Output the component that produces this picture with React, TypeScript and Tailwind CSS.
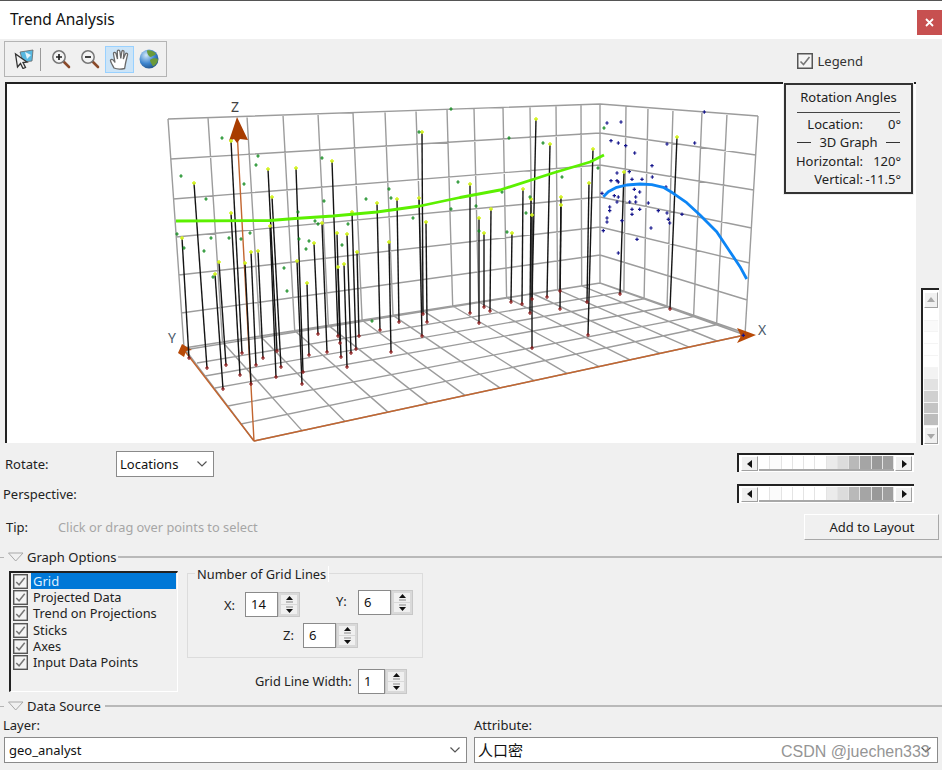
import React from "react";

type P = [number, number];
const lerp = (a: P, b: P, t: number): P => [a[0] + (b[0] - a[0]) * t, a[1] + (b[1] - a[1]) * t];
const line = (a: P, b: P) => `M${a[0].toFixed(1)} ${a[1].toFixed(1)}L${b[0].toFixed(1)} ${b[1].toFixed(1)}`;

const A: P = [184, 348], B: P = [600, 283], C: P = [745, 335], D: P = [254, 441];
const At: P = [168, 119], Bt: P = [600, 104], Ct: P = [758, 116];
const leftTops = [168, 208, 247, 283, 318, 353, 385, 416, 447, 474, 503, 530, 556, 581, 600];
const rightTops = [600, 626, 648, 673, 702, 727, 758];
const frontX = [254, 302, 345, 388, 428, 465, 500, 534, 567, 599, 630, 660, 689, 717, 745];
const backY = [104, 133, 165, 197, 227, 255, 283];
const leftY = [119, 159, 199, 237, 275, 313, 350];
const rightY = [116, 155, 190, 228, 263, 300, 333];
const adPts: P[] = [[184, 348], [197, 363], [205, 376], [215, 388], [228, 406], [241, 424], [254, 441]];

function gridPath() {
  let d = "";
  leftTops.forEach((x, i) => {
    const t = (x - 168) / 432;
    const top = lerp(At, Bt, t), bot = lerp(A, B, t);
    d += line(top, bot);
    const front: P = [frontX[i], D[1] + ((frontX[i] - D[0]) / (C[0] - D[0])) * (C[1] - D[1])];
    d += line(bot, front);
  });
  rightTops.forEach((x, i) => {
    const t = (x - 600) / 158;
    const top = lerp(Bt, Ct, t), bot = lerp(B, C, t);
    d += line(top, bot);
    d += line(bot, adPts[i]);
  });
  for (let j = 0; j < 7; j++) {
    const lx = 168 + (j / 6) * 16;
    const rx = 758 - (j / 6) * 13;
    d += line([lx, leftY[j]], [600, backY[j]]);
    d += line([600, backY[j]], [rx, rightY[j]]);
    d += line(adPts[j], lerp(B, C, (rightTops[j] - 600) / 158));
  }
  return d;
}

const sticks: [number, number, number, number][] = [
  [194, 183, 207, 368], [182, 238, 189, 358], [231, 141, 242, 353], [231, 213, 240, 375], [219, 262, 226, 365],
  [215, 274, 223, 389], [245, 263, 251, 384], [251, 252, 256, 365], [258, 251, 263, 358], [268, 169, 277, 351],
  [272, 197, 281, 367], [270, 226, 276, 377], [296, 168, 303, 372], [297, 261, 302, 384], [307, 283, 309, 355],
  [332, 161, 338, 336], [314, 243, 318, 334], [322, 223, 327, 352], [337, 233, 340, 343], [347, 234, 351, 353],
  [338, 267, 341, 357], [344, 264, 347, 367], [352, 212, 356, 349], [357, 252, 359, 336], [377, 203, 380, 330],
  [389, 242, 391, 352], [397, 199, 399, 322], [419, 198, 422, 336], [422, 132, 423, 314], [426, 222, 427, 322],
  [470, 184, 470, 313], [479, 218, 479, 323], [484, 233, 484, 307], [491, 209, 490, 311], [512, 233, 511, 302],
  [523, 189, 522, 304], [531, 199, 530, 313], [532, 215, 532, 348], [536, 119, 532, 299], [550, 144, 547, 297],
  [561, 197, 560, 291], [561, 205, 560, 309], [589, 183, 587, 302], [593, 149, 588, 335], [624, 172, 620, 294],
  [677, 137, 670, 309],
];

const green: P[] = [
  [222, 138], [181, 176], [206, 199], [258, 156], [256, 165], [244, 184], [322, 158], [324, 201], [366, 199], [389, 189],
  [391, 198], [451, 109], [458, 182], [451, 209], [413, 218], [419, 132], [298, 212], [315, 221], [318, 224], [348, 224],
  [177, 234], [184, 248], [211, 238], [204, 251], [229, 238], [241, 239], [250, 233], [299, 239], [309, 241], [306, 249],
  [342, 245], [284, 268], [509, 138], [543, 143], [562, 177], [598, 168], [604, 128], [502, 192], [476, 206], [530, 197],
  [526, 213], [507, 232], [479, 231], [287, 291], [372, 321], [213, 277],
];
const blueZ: P[] = [
  [441, 99], [483, 96], [733, 66], [453, 152], [475, 159], [497, 167], [621, 162], [704, 159], [524, 189], [576, 227],
  [471, 249], [508, 245], [577, 261], [453, 272], [471, 272], [475, 276], [516, 268], [546, 268], [618, 291], [523, 298],
  [539, 306], [463, 317], [475, 321], [527, 321], [471, 336], [509, 336], [527, 336], [565, 339], [449, 351], [449, 362],
  [516, 358], [539, 358], [595, 362], [621, 369], [666, 373], [516, 373], [441, 384], [441, 396], [625, 388], [629, 399],
  [486, 392], [573, 414], [430, 422], [531, 448], [475, 489], [426, 310], [850, 736],
];
const blue: P[] = blueZ.map(([x, y]) => [x / 3 + 460, y / 3 + 90]);
const plus = (pts: P[], r: number) => pts.map(([x, y]) => `M${(x - r).toFixed(1)} ${y.toFixed(1)}h${2 * r}M${x.toFixed(1)} ${(y - r).toFixed(1)}v${2 * r}`).join("");
const blueCurve = ([[430, 320], [445, 305], [470, 292], [500, 285], [540, 282], [575, 284], [610, 292], [640, 310], [680, 338], [720, 375], [770, 425], [810, 485], [840, 530], [860, 567]] as P[])
  .map(([x, y], i) => `${i ? "L" : "M"}${(x / 3 + 460).toFixed(1)} ${(y / 3 + 90).toFixed(1)}`)
  .join("");

function Chart() {
  return (
    <svg width="909" height="359" viewBox="7 84 909 359" className="block" style={{ fontFamily: "'Noto Sans', sans-serif" }}>
      <path d={gridPath()} fill="none" stroke="#9c9c9c" strokeWidth="1.4" />
      <path d="M254 441L237 130M184 350L254 441M254 441L745 335" fill="none" stroke="#c2652f" strokeWidth="1.4" />
      <path d="M237 117L229 141L234 139L237 143L240 139L248 140Z" fill="#a83c00" />
      <path d="M756 335L737 328L741 336L737 343Z" fill="#b84a08" />
      <path d="M178 353L182 344L192 350L186 351L184 357Z" fill="#b84a08" />
      {sticks.map(([a, b, c, d], i) => (
        <path key={i} d={`M${a} ${b}L${c} ${d}`} stroke="#141414" strokeWidth="1.4" />
      ))}
      <path d={plus(sticks.map(([a, b]) => [a, b] as P), 2)} stroke="#d4f51e" strokeWidth="1.4" />
      <path d={plus(sticks.map(([, , c, d]) => [c, d] as P), 2)} stroke="#8e1b1b" strokeWidth="1.2" />
      <path d={plus(green, 1.7)} stroke="#0f8a1c" strokeWidth="1.2" />
      <path d={plus(blue, 1.7)} stroke="#14148c" strokeWidth="1.2" />
      <path d="M176 221L270 220.5L295 218.5L333 216L377 212L420 206L460 197.5L500 190L553 173L590 162L604 155" fill="none" stroke="#5cf000" strokeWidth="2.8" strokeLinejoin="round" />
      <path d={blueCurve} fill="none" stroke="#0c85f5" strokeWidth="2.8" strokeLinejoin="round" />
      <text x="231" y="112" fontSize="14" fill="#444">Z</text>
      <text x="758" y="335" fontSize="14" fill="#4a5a6a">X</text>
      <text x="168" y="343" fontSize="14" fill="#4a5a6a">Y</text>
    </svg>
  );
}

function Check({ size = 16 }: { size?: number }) {
  return (
    <svg width={size} height={size} viewBox="0 0 16 16" className="block shrink-0">
      <rect x="0.75" y="0.75" width="14.5" height="14.5" fill="#f4f4f4" stroke="#555" strokeWidth="1.5" />
      <path d="M3.5 8.5L6.5 11.5L12.5 4" fill="none" stroke="#777" strokeWidth="1.6" />
    </svg>
  );
}

function Chevron() {
  return (
    <svg width="12" height="8" viewBox="0 0 12 8" className="block shrink-0">
      <path d="M1.5 1.5L6 6L10.5 1.5" fill="none" stroke="#555" strokeWidth="1.2" />
    </svg>
  );
}

function Spin() {
  return (
    <div className="flex flex-col w-[22px] h-full bg-[#d9d9d9] border border-[#c8c8c8] p-[2px] gap-[1px]">
      <div className="flex-1 bg-[#f0f0f0] flex items-center justify-center">
        <svg width="9" height="7" viewBox="0 0 9 7"><path d="M4.5 0L8 4H1Z" fill="#111" /><path d="M1 6H8" stroke="#888" /></svg>
      </div>
      <div className="flex-1 bg-[#f0f0f0] flex items-center justify-center">
        <svg width="9" height="7" viewBox="0 0 9 7"><path d="M4.5 7L8 3H1Z" fill="#111" /><path d="M1 1H8" stroke="#888" /></svg>
      </div>
    </div>
  );
}

function Num({ value, w = 33, h = 25 }: { value: string; w?: number; h?: number }) {
  return (
    <div className="flex" style={{ height: h }}>
      <div className="bg-white border border-[#8a8a8a] pl-[5px] flex items-center text-[13px] text-[#111]" style={{ width: w }}>
        {value}
      </div>
      <Spin />
    </div>
  );
}

function Section({ title, lineFrom }: { title: string; lineFrom: number }) {
  return (
    <div className="flex items-center h-[18px]">
      <div className="w-[4px] h-px bg-[#b4b4b4]" />
      <svg width="23" height="12" viewBox="0 0 23 12" className="block shrink-0">
        <path d="M4.5 2H19L11.7 10Z" fill="#f0f0f0" stroke="#a8a8a8" />
      </svg>
      <span className="text-[13px] text-[#222] whitespace-nowrap" style={{ width: lineFrom }}>{title}</span>
      <div className="flex-1 h-[2px] bg-[#b9b9b9]" />
    </div>
  );
}

const bands = ["#ffffff", "#fbfbfb", "#ffffff", "#ffffff", "#ffffff", "#ffffff", "#ebebeb", "#dcdcdc", "#b9b9b9", "#a5a5a5", "#999999", "#9f9f9f"];
const vBands = ["#ffffff", "#fafafa", "#ffffff", "#ffffff", "#ffffff", "#f3f3f3", "#e2e2e2", "#d0d0d0", "#c4c4c4", "#bdbdbd"];

function Arrow({ dir, color = "#111" }: { dir: "l" | "r" | "u" | "d"; color?: string }) {
  const d = { l: "M1 5L6 1V9Z", r: "M7 5L2 1V9Z", u: "M5 2L9 7H1Z", d: "M5 8L9 3H1Z" }[dir];
  return <svg width="10" height="10" viewBox="0 0 10 10" className={dir === "l" || dir === "r" ? "block ml-[3px]" : "block"}><path d={d} fill={color} /></svg>;
}

function Btn({ children, className }: { children: React.ReactNode; className: string }) {
  return (
    <div className={`bg-[#f0f0f0] border-r border-b border-[#a0a0a0] border-t border-l border-t-white border-l-white flex items-center justify-center shrink-0 ${className}`}>
      {children}
    </div>
  );
}

function HSlider() {
  return (
    <div className="w-[177px] h-[19px] flex items-stretch bg-white border-t-2 border-l-2 border-[#222] pl-[2px] pr-[2px] pt-[1px] pb-[1px]">
      <Btn className="w-[17px]"><Arrow dir="l" /></Btn>
      <div className="flex-1 flex border-b-2 border-[#a8a8a8] mx-px">
        {bands.map((c, i) => (
          <div key={i} className="flex-1 border-r border-[#e4e4e4]" style={{ backgroundColor: c }} />
        ))}
      </div>
      <Btn className="w-[17px]"><Arrow dir="r" /></Btn>
    </div>
  );
}

function VSlider() {
  return (
    <div className="w-[18px] h-[157px] flex flex-col bg-white border-t-2 border-l-2 border-[#222] px-[1px] pt-[2px] pb-[1px]">
      <Btn className="h-[16px] w-full"><Arrow dir="u" color="#a8a8a8" /></Btn>
      <div className="flex-1 flex flex-col my-px">
        {vBands.map((c, i) => (
          <div key={i} className="flex-1 border-b border-[#f4f4f4]" style={{ backgroundColor: c }} />
        ))}
      </div>
      <Btn className="h-[17px] w-full"><Arrow dir="d" color="#a8a8a8" /></Btn>
    </div>
  );
}

function SelectIcon() {
  return (
    <svg width="20" height="20" viewBox="0 0 20 20" className="block">
      <path d="M6 3L19 1L18 12L9 13Z" fill="#58b8e0" stroke="#666" strokeWidth="0.8" />
      <path d="M11 3L17 6L13 10" fill="#e4f4fa" />
      <path d="M1.5 5L3.5 18L6.5 14.5L9 19.5L11.5 18.5L9 13.5L13 13Z" fill="#f4f4f4" stroke="#333" strokeWidth="1.3" />
    </svg>
  );
}

function Mag({ minus }: { minus?: boolean }) {
  return (
    <svg width="20" height="20" viewBox="0 0 20 20" className="block">
      <path d="M12.5 12.5L18 18" stroke="#8a4a2a" strokeWidth="2.6" strokeLinecap="round" />
      <circle cx="8" cy="8" r="6.2" fill="#f4f4f4" stroke="#777" strokeWidth="1.5" />
      <path d={minus ? "M5 8H11" : "M5 8H11M8 5V11"} stroke="#222" strokeWidth="1.7" />
    </svg>
  );
}

function HandIcon() {
  return (
    <svg width="22" height="22" viewBox="0 0 22 22" className="block">
      <path
        d="M5 20C3.5 17 1.5 14 1.5 12.5C1.5 11 3.5 11 5 13L6 14.5L4.5 6C4.3 4.3 6.4 3.8 7 5.5L8.5 11L8.3 3.5C8.3 1.6 10.6 1.6 10.9 3.5L11.8 10.5L12.8 3.6C13.1 2 15.2 2.2 15 4L14.3 11L16.4 6C17 4.6 18.9 5.2 18.5 6.8L16.8 14C16.3 16.5 16 18.5 15.6 20.5C12 21.3 8 21.3 5 20Z"
        fill="#fff"
        stroke="#6a6a6a"
        strokeWidth="1.3"
      />
    </svg>
  );
}

function Globe() {
  return (
    <svg width="20" height="20" viewBox="0 0 20 20" className="block">
      <defs>
        <radialGradient id="g" cx="0.35" cy="0.3" r="0.8">
          <stop offset="0" stopColor="#cfe6f8" />
          <stop offset="0.55" stopColor="#3f86cf" />
          <stop offset="1" stopColor="#1b4a80" />
        </radialGradient>
      </defs>
      <circle cx="10" cy="10" r="9.5" fill="url(#g)" />
      <path d="M8 1.5C11 .8 15 2 17 5C16 7 13 6.5 12 8C10 8 8 5 8 1.5ZM11 11C13 9 17 9 19 10C19 13 17 16 14 17.5C13 15 11 13.5 11 11Z" fill="#6a9a3a" />
    </svg>
  );
}

const listItems = ["Grid", "Projected Data", "Trend on Projections", "Sticks", "Axes", "Input Data Points"];

function Sel({ text, className, textClass = "text-[13px]" }: { text: string; className: string; textClass?: string }) {
  return (
    <div className={`h-[26px] bg-white border border-[#8a8a8a] flex items-center justify-between pl-[3px] pr-[5px] text-[#111] ${className}`}>
      <span className={textClass}>{text}</span>
      <Chevron />
    </div>
  );
}

export default function App() {
  return (
    <div
      className="w-[942px] h-[770px] overflow-hidden flex flex-col bg-[#f0f0f0] text-[#222] text-[13px] leading-none"
      style={{ fontFamily: "'Noto Sans', 'Noto Sans CJK SC', sans-serif" }}
    >
      <div className="h-px bg-[#555555]" />
      <div className="h-[38px] bg-white flex justify-between shrink-0">
        <div className="pl-[10px] pt-[11px] text-[15.5px] text-[#111]">Trend Analysis</div>
        <div className="mt-[9px] w-[25px] h-[25px] bg-[#c75050] flex items-center justify-center">
          <svg width="9" height="9" viewBox="0 0 9 9"><path d="M1 1L8 8M8 1L1 8" stroke="#fff" strokeWidth="1.8" /></svg>
        </div>
      </div>

      <div className="h-[43px] shrink-0 flex justify-between pt-[2px] pl-[4px]">
        <div className="w-[163px] h-[36px] border border-[#b4b4b4] flex items-center pl-[9px]">
          <SelectIcon />
          <div className="w-px h-[23px] bg-[#9a9a9a] ml-[6px] mr-[10px]" />
          <Mag />
          <div className="w-[9px]" />
          <Mag minus />
          <div className="ml-[5px] w-[29px] h-[27px] bg-[#cce4f7] border border-[#99d1ff] flex items-center justify-center"><HandIcon /></div>
          <div className="ml-[5px]"><Globe /></div>
        </div>
        <div className="flex items-start gap-[4px] pt-[12px] pr-[79px]">
          <Check size={16} />
          <span className="text-[13px] text-[#333] pt-[2px]">Legend</span>
        </div>
      </div>

      <div className="relative h-[363px] shrink-0 flex items-start pl-[5px]">
        <div className="w-[911px] h-[361px] bg-white border-t-2 border-l-2 border-[#222]">
          <Chart />
        </div>
        <div className="ml-[5px] mt-[206px]"><VSlider /></div>
        <div className="absolute left-[784px] top-[1px] w-[129px] h-[111px] bg-[#f0f0f0] border-2 border-[#333] ring-1 ring-[#f0f0f0] flex flex-col items-center pt-[6px] text-[13px] text-[#222]">
          <div>Rotation Angles</div>
          <div className="w-[103px] h-px bg-[#444] mt-[8px] mb-[2px]" />
          <div className="w-[115px] grid grid-cols-[71px_1fr] auto-rows-[18.5px] items-center pl-px">
            <div className="text-right">Location:</div><div className="text-right pr-[5px]">0°</div>
          </div>
          <div className="w-[103px] h-[18.5px] flex items-center justify-between">
            <div className="w-[14px] h-px bg-[#333]" />3D Graph<div className="w-[14px] h-px bg-[#333]" />
          </div>
          <div className="w-[115px] grid grid-cols-[71px_1fr] auto-rows-[18.5px] items-center pl-px">
            <div className="text-right">Horizontal:</div><div className="text-right pr-[5px]">120°</div>
            <div className="text-right">Vertical:</div><div className="text-right pr-[5px] whitespace-nowrap">-11.5°</div>
          </div>
        </div>
      </div>

      <div className="h-[32px] shrink-0 flex items-start justify-between pt-[6px] pl-[5px] pr-[28px]">
        <div className="flex items-center h-[26px]">
          <span className="w-[111px]">Rotate:</span>
          <Sel text="Locations" className="w-[98px] pr-[3px]" />
        </div>
        <div className="pt-[2px]"><HSlider /></div>
      </div>
      <div className="h-[32px] shrink-0 flex items-center justify-between pl-[3px] pr-[28px]">
        <span className="pt-[2px]">Perspective:</span>
        <HSlider />
      </div>
      <div className="h-[36px] shrink-0 flex items-center justify-between pl-[6px] pr-[3px]">
        <div className="flex items-center">
          <span className="w-[52px]">Tip:</span>
          <span className="text-[#a6a6a6] text-[12.8px]">Click or drag over points to select</span>
        </div>
        <div className="w-[135px] h-[26px] bg-[#f0f0f0] border border-t-white border-l-white border-r-[#a8a8a8] border-b-[#a8a8a8] flex items-center justify-center text-[#222] pl-px">
          Add to Layout
        </div>
      </div>

      <div className="h-[26px] shrink-0 pt-[3px]"><Section title="Graph Options" lineFrom={91} /></div>

      <div className="h-[122px] shrink-0 flex items-start pl-[9px]">
        <div className="w-[169px] h-[121px] border-t-2 border-l-2 border-[#222] border-r border-b border-r-white border-b-white flex flex-col pl-[2px]">
          {listItems.map((t, i) => (
            <div key={t} className="h-[16.3px] flex items-center shrink-0">
              <Check size={15} />
              <span className={i === 0 ? "ml-[3px] w-[145px] h-[16px] bg-[#0078d7] text-[#dff0ff] flex items-center pl-[2px]" : "ml-[5px] whitespace-nowrap text-[12.8px]"}>{t}</span>
            </div>
          ))}
        </div>
        <div className="relative ml-[9px] mt-[2px] w-[236px] h-[85px] border border-[#dcdcdc] flex flex-col">
          <div className="absolute left-[7px] -top-[8px] px-[2px] bg-[#f0f0f0] text-[#222] h-[16px] flex items-center border-r border-white text-[12.8px]">Number of Grid Lines</div>
          <div className="flex items-start mt-[18px] pl-[36px]">
            <span className="w-[21px] pt-[7px]">X:</span>
            <Num value="14" />
            <div className="w-[36px]" />
            <span className="w-[22px] pt-[5px] -mt-[2px]">Y:</span>
            <div className="-mt-[2px]"><Num value="6" /></div>
          </div>
          <div className="flex items-center mt-[6px] pl-[95px]">
            <span className="w-[20px]">Z:</span>
            <Num value="6" />
          </div>
        </div>
      </div>

      <div className="shrink-0 h-[14px] -mt-[19px] flex items-center pl-[255px] relative">
        <span className="w-[103px] text-[12.8px]">Grid Line Width:</span>
        <Num value="1" w={27} h={25} />
      </div>

      <div className="h-[18px] shrink-0 mt-[9px]"><Section title="Data Source" lineFrom={78} /></div>
      <div className="h-[20px] shrink-0 flex items-center text-[13px]">
        <span className="w-[474px] pl-[3px]">Layer:</span>
        <span>Attribute:</span>
      </div>
      <div className="relative flex pl-[4px] pr-[4px] justify-between mt-[2px]">
        <Sel text="geo_analyst" className="w-[463px] pl-[4px]" />
        <Sel text="人口密" className="w-[464px]" textClass="text-[15px]" />
        <div className="absolute left-[781px] top-[7px] text-[16px] text-[#959595] whitespace-nowrap" style={{ fontFamily: "'Liberation Sans', sans-serif" }}>
          CSDN @juechen333
        </div>
      </div>
    </div>
  );
}
